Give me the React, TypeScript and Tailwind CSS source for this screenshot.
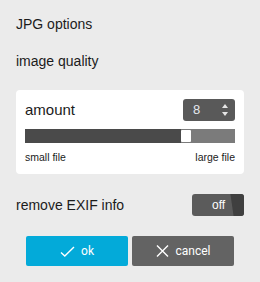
import { useState } from 'react';

function CheckIcon() {
  return (
    <svg width="15" height="11" viewBox="0 0 15 11" fill="none">
      <path d="M1 6.5 4.8 10 14 1" stroke="white" strokeWidth="1.4" />
    </svg>
  );
}

function CrossIcon() {
  return (
    <svg width="13" height="12" viewBox="0 0 13 12" fill="none">
      <path d="M1 0.5 12 11.5M12 0.5 1 11.5" stroke="white" strokeWidth="1.4" />
    </svg>
  );
}

export default function App() {
  const [quality] = useState(8);
  const [stripExif] = useState(false);
  const min = 1;
  const max = 10;
  const pct = (quality - min) / (max - min);

  return (
    <div
      className="w-[260px] h-[282px] bg-[#ebebeb] px-4 pt-[14px] flex flex-col text-[#1b1b1b]"
      style={{ fontFamily: '"Liberation Sans", Arial, sans-serif' }}
    >
      <div className="text-[14px] leading-5">JPG options</div>
      <div className="mt-[17px] text-[14px] leading-5">image quality</div>

      <div className="mt-[19px] rounded-[4px] bg-white px-[9px] pt-[9px] pb-[10px]">
        <div className="h-[22px] flex items-center justify-between">
          <span className="text-[15px]">amount</span>
          <div className="w-[52px] h-[22px] rounded-[3px] bg-[#595959] flex items-center justify-between pl-[10px] pr-[7px]">
            <span className="text-[13px] text-[#e4e8ee]">{quality}</span>
            <div className="flex flex-col gap-[4px]">
              <svg width="6" height="4" viewBox="0 0 6 4">
                <path d="M3 0 6 4H0Z" fill="#e6e6e6" />
              </svg>
              <svg width="6" height="4" viewBox="0 0 6 4">
                <path d="M0 0H6L3 4Z" fill="#e6e6e6" />
              </svg>
            </div>
          </div>
        </div>

        <div className="mt-2 h-[14px] flex items-center bg-[#7b7b7b]">
          <div className="h-full bg-[#4a4a4a]" style={{ width: `${pct * 200}px` }} />
          <div className="w-[10px] h-[12px] bg-white rounded-[1px]" />
        </div>

        <div className="mt-[7px] flex justify-between text-[10.5px] leading-[14px]">
          <span>small file</span>
          <span>large file</span>
        </div>
      </div>

      <div className="mt-5 h-[22px] flex items-center justify-between">
        <span className="text-[14px]">remove EXIF info</span>
        <div className="relative w-[52px] h-[22px] rounded-[3px] bg-[#5b5b5b] overflow-hidden flex items-center">
          <span className="ml-[20px] text-[12px] text-white">{stripExif ? 'on' : 'off'}</span>
          <div
            className="absolute right-0 top-0 h-full w-[16px] bg-[#3f3f3f]"
            style={{ clipPath: 'polygon(15% 0, 100% 0, 100% 100%, 35% 100%)' }}
          />
        </div>
      </div>

      <div
        className="mt-5 flex justify-center gap-1 text-white text-[12px]"
        style={{ fontFamily: 'Roboto, "Liberation Sans", sans-serif' }}
      >
        <button className="w-[102px] h-[30px] rounded-[2px] bg-[#03aad9] flex items-center justify-center gap-[6px]">
          <CheckIcon />
          <span>ok</span>
        </button>
        <button className="w-[102px] h-[30px] rounded-[2px] bg-[#636363] flex items-center justify-center gap-[7px]">
          <CrossIcon />
          <span>cancel</span>
        </button>
      </div>
    </div>
  );
}
